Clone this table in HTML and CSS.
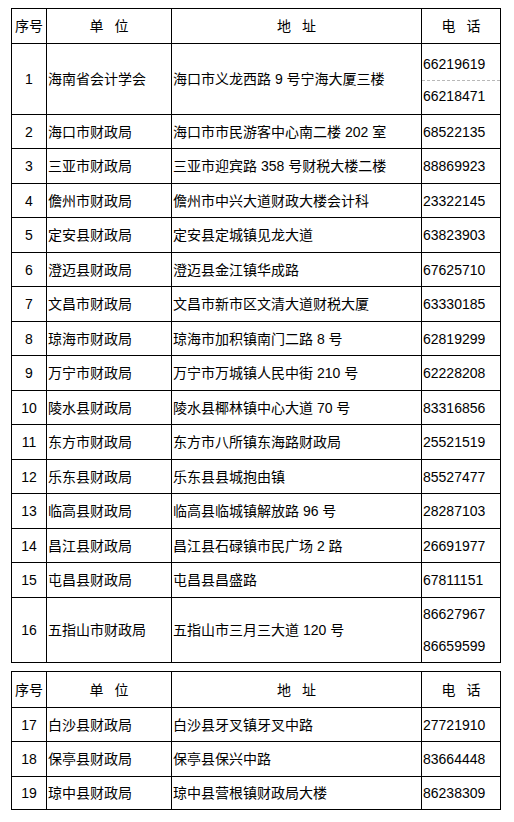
FILE: index.html
```html
<!DOCTYPE html>
<html lang="zh">
<head>
<meta charset="utf-8">
<title>财政局通讯录</title>
<link rel="stylesheet" href="styles.css">
</head>
<body>
<div class="page">
<table class="list">
  <colgroup><col class="c1"><col class="c2"><col class="c3"><col class="c4"></colgroup>
  <tr class="head"><th>序号</th><th>单 位</th><th>地 址</th><th>电 话</th></tr>
  <tr class="tall1"><td class="no">1</td><td>海南省会计学会</td><td>海口市义龙西路 9 号宁海大厦三楼</td><td class="multi"><div class="ph first dash">66219619</div><div class="ph second">66218471</div></td></tr>
  <tr class="r34"><td class="no">2</td><td>海口市财政局</td><td>海口市市民游客中心南二楼 202 室</td><td class="tel">68522135</td></tr>
  <tr class="r35"><td class="no">3</td><td>三亚市财政局</td><td>三亚市迎宾路 358 号财税大楼二楼</td><td class="tel">88869923</td></tr>
  <tr class="r34"><td class="no">4</td><td>儋州市财政局</td><td>儋州市中兴大道财政大楼会计科</td><td class="tel">23322145</td></tr>
  <tr class="r35"><td class="no">5</td><td>定安县财政局</td><td>定安县定城镇见龙大道</td><td class="tel">63823903</td></tr>
  <tr class="r34"><td class="no">6</td><td>澄迈县财政局</td><td>澄迈县金江镇华成路</td><td class="tel">67625710</td></tr>
  <tr class="r35"><td class="no">7</td><td>文昌市财政局</td><td>文昌市新市区文清大道财税大厦</td><td class="tel">63330185</td></tr>
  <tr class="r34"><td class="no">8</td><td>琼海市财政局</td><td>琼海市加积镇南门二路 8 号</td><td class="tel">62819299</td></tr>
  <tr class="r35"><td class="no">9</td><td>万宁市财政局</td><td>万宁市万城镇人民中街 210 号</td><td class="tel">62228208</td></tr>
  <tr class="r34"><td class="no">10</td><td>陵水县财政局</td><td>陵水县椰林镇中心大道 70 号</td><td class="tel">83316856</td></tr>
  <tr class="r35"><td class="no">11</td><td>东方市财政局</td><td>东方市八所镇东海路财政局</td><td class="tel">25521519</td></tr>
  <tr class="r34"><td class="no">12</td><td>乐东县财政局</td><td>乐东县县城抱由镇</td><td class="tel">85527477</td></tr>
  <tr class="r35"><td class="no">13</td><td>临高县财政局</td><td>临高县临城镇解放路 96 号</td><td class="tel">28287103</td></tr>
  <tr class="r34"><td class="no">14</td><td>昌江县财政局</td><td>昌江县石碌镇市民广场 2 路</td><td class="tel">26691977</td></tr>
  <tr class="r35"><td class="no">15</td><td>屯昌县财政局</td><td>屯昌县昌盛路</td><td class="tel">67811151</td></tr>
  <tr class="tall16"><td class="no">16</td><td>五指山市财政局</td><td>五指山市三月三大道 120 号</td><td class="multi"><div class="ph half">86627967</div><div class="ph half">86659599</div></td></tr>
</table>

<table class="list second-table">
  <colgroup><col class="c1"><col class="c2"><col class="c3"><col class="c4"></colgroup>
  <tr class="head head2"><th>序号</th><th>单 位</th><th>地 址</th><th>电 话</th></tr>
  <tr class="r34"><td class="no">17</td><td>白沙县财政局</td><td>白沙县牙叉镇牙叉中路</td><td class="tel">27721910</td></tr>
  <tr class="r35"><td class="no">18</td><td>保亭县财政局</td><td>保亭县保兴中路</td><td class="tel">83664448</td></tr>
  <tr class="r33"><td class="no">19</td><td>琼中县财政局</td><td>琼中县营根镇财政局大楼</td><td class="tel">86238309</td></tr>
</table>
</div>
</body>
</html>
```

FILE: styles.css
```css
html, body {
  margin: 0;
  padding: 0;
  background: #ffffff;
}

.page {
  padding: 8px 0 0 11px;
  font-family: "Liberation Sans", "Noto Sans CJK SC", sans-serif;
  font-size: 14px;
  color: #000000;
}

.list {
  border-collapse: collapse;
  table-layout: fixed;
  width: 490px;
}

.second-table {
  margin-top: 8px;
}

.c1 { width: 35px; }
.c2 { width: 125px; }
.c3 { width: 250px; }
.c4 { width: 79px; }

.list th,
.list td {
  border: 1px solid #000000;
  padding: 0 0 0 1px;
  vertical-align: middle;
  text-align: left;
  font-weight: normal;
  white-space: nowrap;
  overflow: hidden;
  line-height: 16px;
}

.list th {
  text-align: center;
  padding: 0;
  word-spacing: 7px;
  height: 34px;
}

.head2 th {
  height: 35px;
}

.r33 td { height: 32px; }
.r34 td { height: 33px; }
.r35 td { height: 34px; }

.list td.no {
  text-align: center;
  padding: 0;
}

.tall1 td {
  height: 70px;
}

.tall16 td {
  height: 64px;
}

.list td.multi {
  padding: 0;
}

.ph {
  padding-left: 1px;
  display: flex;
  align-items: center;
}

.first {
  height: 33px;
}

.dash {
  border-bottom: 1px dashed #b8b8b8;
}

.second {
  height: 30px;
}

.half {
  height: 32px;
}
```
